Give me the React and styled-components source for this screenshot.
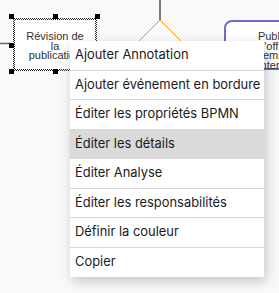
import React from 'react';
import styled, { createGlobalStyle } from 'styled-components';

const MENU_ITEMS = [
  'Ajouter Annotation',
  'Ajouter événement en bordure',
  'Éditer les propriétés BPMN',
  'Éditer les détails',
  'Éditer Analyse',
  'Éditer les responsabilités',
  'Définir la couleur',
  'Copier',
];

const ACTIVE = 'Éditer les détails';

// handle spots around the selected shape
const HANDLES = [
  ['l', 't'], ['c', 't'], ['r', 't'],
  ['l', 'm'],
  ['l', 'b'], ['c', 'b'], ['r', 'b'],
];

const H_POS = { l: '-4px', c: 'calc(50% - 2px)', r: 'calc(100% - 2px)' };
const V_POS = { t: '-4px', m: 'calc(50% - 2px)', b: 'calc(100% - 2px)' };

const GlobalStyle = createGlobalStyle`
  html, body {
    margin: 0;
    padding: 0;
    background: #f9f9f9;
    overflow: hidden;
  }
`;

const Canvas = styled.div`
  position: relative;
  width: 279px;
  height: 293px;
  overflow: hidden;
  background: #f9f9f9;
  font-family: "Liberation Sans", Arial, sans-serif;
`;

const Edges = styled.svg`
  position: absolute;
  left: 0;
  top: 0;
`;

const Selection = styled.div`
  position: absolute;
  left: 13px;
  top: 18px;
  width: 84px;
  height: 53px;
  box-sizing: border-box;
  padding: 2px;
  background: repeating-conic-gradient(#222 0 25%, #fff 0 50%) 0 0 / 2px 2px;
`;

const TaskBody = styled.div`
  width: 100%;
  height: 100%;
  background: #fff;
  display: flex;
  justify-content: center;
  padding-top: 12px;
  box-sizing: border-box;
`;

const NodeLabel = styled.div`
  font-size: 11px;
  line-height: 9.5px;
  color: #333;
  text-align: center;
  white-space: nowrap;
`;

const Handle = styled.span`
  position: absolute;
  width: 5px;
  height: 5px;
  background: #000;
  left: ${p => H_POS[p.$h]};
  top: ${p => V_POS[p.$v]};
`;

const RoundedTask = styled.div`
  position: absolute;
  left: 224px;
  top: 20px;
  width: 90px;
  height: 50px;
  box-sizing: border-box;
  border: 2px solid #6c6ccc;
  border-radius: 8px;
  background: #fff;
  padding: 10px 0 0 12px;
  display: flex;
  justify-content: center;
`;

const Menu = styled.ul`
  position: absolute;
  left: 70px;
  top: 41px;
  width: 194px;
  margin: 0;
  padding: 0;
  list-style: none;
  background: #fff;
  box-shadow: 2px 4px 12px rgba(0, 0, 0, 0.22);
  font-family: Inter, "Liberation Sans", sans-serif;
`;

const MenuItem = styled.li`
  height: 29.5px;
  box-sizing: border-box;
  display: flex;
  align-items: center;
  padding: 0 0 1px 5px;
  font-size: 12.9px;
  color: #1b1b1b;
  background: ${p => (p.$active ? '#dadada' : '#fff')};
  border-bottom: 1px solid #d8d8d8;
  white-space: nowrap;

  &:last-child {
    border-bottom: none;
  }
`;

export default function App() {
  return (
    <Canvas>
      <GlobalStyle />
      <Edges width="279" height="293">
        <line x1="0" y1="43.5" x2="10" y2="43.5" stroke="#666" strokeWidth="1.5" />
        <line x1="160" y1="0" x2="160" y2="20" stroke="#7a7a7a" strokeWidth="2" />
        <polygon
          points="160,20 200,60 160,100 120,60"
          fill="#fcfcfc"
          stroke="#ff8c00"
          strokeWidth="1"
        />
      </Edges>

      <RoundedTask>
        <NodeLabel>
          Publier
          <br />
          l'offre
          <br />
          d'emploi
          <br />
          interne
        </NodeLabel>
      </RoundedTask>

      <Selection>
        <TaskBody>
          <NodeLabel>
            Révision de
            <br />
            la
            <br />
            publication
          </NodeLabel>
        </TaskBody>
        {HANDLES.map(([h, v]) => (
          <Handle key={h + v} $h={h} $v={v} />
        ))}
      </Selection>

      <Menu>
        {MENU_ITEMS.map(item => (
          <MenuItem key={item} $active={item === ACTIVE}>
            {item}
          </MenuItem>
        ))}
      </Menu>
    </Canvas>
  );
}
